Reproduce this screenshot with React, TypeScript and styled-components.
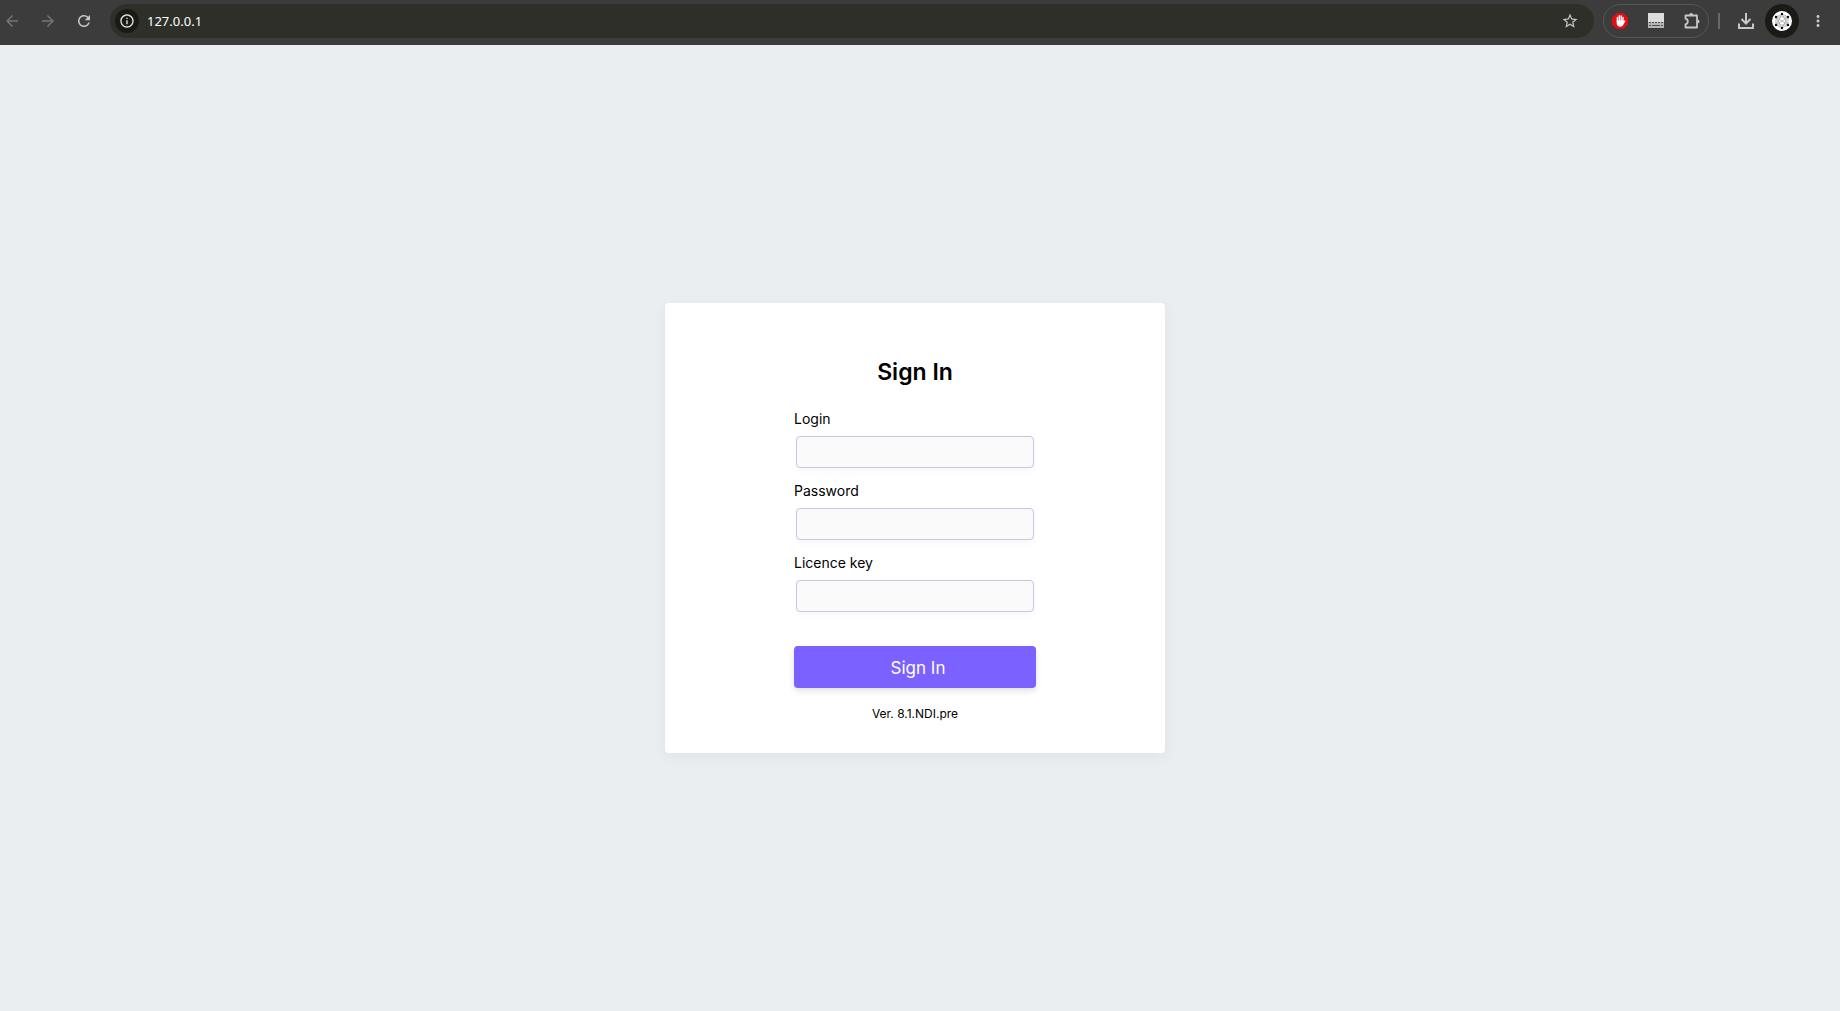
import React from "react";
import styled, { createGlobalStyle } from "styled-components";
import {
  MdArrowBack,
  MdArrowForward,
  MdRefresh,
  MdInfoOutline,
  MdStarBorder,
  MdMoreVert,
} from "react-icons/md";

const GlobalStyle = createGlobalStyle`
  *, *::before, *::after { box-sizing: border-box; }
  body {
    margin: 0;
    background: #eaeef1;
    color: #000;
    font-family: Inter, "Liberation Sans", sans-serif;
  }
`;

const Window = styled.div`
  display: flex;
  flex-direction: column;
  min-height: 100vh;
`;

const Toolbar = styled.header`
  display: flex;
  align-items: center;
  gap: 9px;
  height: 45px;
  padding: 0 12px 3px 2px;
  background: #3c3c3c;
`;

const NavGroup = styled.nav`
  display: flex;
  gap: 16px;
  margin-right: 7px;
`;

const IconButton = styled.button<{ $dim?: boolean }>`
  display: flex;
  align-items: center;
  justify-content: center;
  flex: none;
  width: 20px;
  height: 20px;
  padding: 0;
  border: 0;
  background: none;
  color: ${(p) => (p.$dim ? "#757575" : "#c7c7c7")};
  font-size: 18px;
`;

const AddressBar = styled.div`
  display: flex;
  align-items: center;
  flex: 1;
  gap: 8px;
  height: 34px;
  padding: 0 14px 0 5px;
  border-radius: 17px;
  background: #2f2f2a;
`;

const SiteInfo = styled(IconButton)`
  width: 24px;
  height: 24px;
  border-radius: 50%;
  background: #1a1a16;
  color: #e6e6e6;
  font-size: 16px;
`;

const Address = styled.input`
  flex: 1;
  min-width: 0;
  padding: 0;
  border: 0;
  outline: 0;
  background: none;
  color: #fff;
  font: 13px/20px "Noto Sans", sans-serif;
`;

const Extensions = styled.div`
  display: flex;
  align-items: center;
  gap: 16px;
  height: 34px;
  padding: 0 6px;
  border: 1px solid #575757;
  border-radius: 17px;
`;

const Divider = styled.span`
  width: 2px;
  height: 16px;
  margin-right: 7px;
  background: #686868;
`;

const Profile = styled(IconButton)`
  width: 34px;
  height: 34px;
  border-radius: 50%;
  background: #1a1a16;
`;

const Page = styled.main`
  display: flex;
  flex: 1;
  align-items: center;
  justify-content: center;
  padding-right: 10px;
`;

const Card = styled.form`
  display: flex;
  flex-direction: column;
  align-items: center;
  width: 500px;
  padding: 54px 24px 30px;
  border-radius: 4px;
  background: #fff;
  box-shadow: 0 4px 16px rgba(0, 0, 0, 0.05);
`;

const Title = styled.h1`
  margin: 0 0 21px;
  font-size: 23px;
  font-weight: 600;
  line-height: 30px;
`;

const Field = styled.div`
  display: flex;
  flex-direction: column;
  width: 242px;
  padding-bottom: 12px;
`;

const Label = styled.label`
  padding: 1px 0 8px;
  font-size: 14px;
  line-height: 19px;
`;

const TextInput = styled.input`
  height: 32px;
  margin: 0 2px;
  padding: 0 8px;
  border: 1px solid #c3c7e3;
  border-radius: 4px;
  background: #fafafa;
  box-shadow: 0 4px 6px rgba(0, 0, 0, 0.03);
  font: inherit;
`;

const Submit = styled.button`
  width: 242px;
  height: 42px;
  margin: 22px 0 16px;
  padding: 2px 0 0 6px;
  border: 0;
  border-radius: 4px;
  background: #7b61ff;
  box-shadow: 0 3px 6px rgba(0, 0, 0, 0.12);
  color: #fff;
  font: 400 17px/24px Inter, sans-serif;
`;

const Version = styled.p`
  margin: 0;
  font-size: 12px;
  line-height: 19px;
`;

const BlockerIcon = () => (
  <svg width="16" height="16" viewBox="0 0 16 16">
    <path d="M4.700 0h6.600L16 4.700v6.600L11.300 16H4.700L0 11.300V4.700z" fill="#e40d12" />
    <path
      d="M5.400 4.500v4M7.300 2.800v6M9.200 2.900v6M11 4.500v5"
      stroke="#fff"
      strokeWidth="1.400"
      strokeLinecap="round"
    />
    <path
      d="M4.700 7.500h7v.8l.8-.8c.6-.4 1.100 0 .8.700l-1.900 3.600c-.7 1.300-1.700 1.900-3.100 1.900-2.200 0-3.600-1.400-3.600-3.500z"
      fill="#fff"
    />
  </svg>
);

const KeyboardIcon = () => (
  <svg width="16" height="16" viewBox="0 0 16 16">
    <path d="M0 0h16v9H0z" fill="#dcdcdc" />
    <path d="M0 9h16v6H0z" fill="#b4b4b4" />
    <path d="M1 9.500h2m1 0h2m1 0h2m1 0h2m1 0h2M1 12.500h2m1 0h8m1 0h2" stroke="#555" />
  </svg>
);

const PuzzleIcon = () => (
  <svg width="18" height="18" viewBox="0 0 18 18">
    <path
      d="M2.500 3.500H14v12H2.500v-3.200c1.500-.4 2.300-1.400 2.300-2.800S4 7.100 2.500 6.700z"
      fill="none"
      stroke="#c7c7c7"
      strokeWidth="1.800"
      strokeLinejoin="round"
    />
    <path d="M6.200 3a2 2 0 0 1 4 0zM14.500 7.500a2 2 0 0 1 0 4z" fill="#c7c7c7" />
  </svg>
);

const DownloadIcon = () => (
  <svg width="16" height="16" viewBox="0 0 16 16" fill="none" stroke="#c7c7c7" strokeWidth="2">
    <path d="M8 0v10M3.500 6l4.500 4.500L12.500 6M1 10.500V15h14v-4.500" />
  </svg>
);

const hexagon = [
  [10, 3],
  [16, 6],
  [16, 14],
  [10, 17],
  [4, 14],
  [4, 6],
];

const AvatarIcon = () => (
  <svg width="20" height="20" viewBox="0 0 20 20">
    <circle cx="10" cy="10" r="10" fill="#fff" />
    <path
      d="M10 3l6 3v8l-6 3-6-3V6zM4 6l12 8M16 6L4 14M4 6h12L10 17zM4 14h12L10 3z"
      fill="none"
      stroke="#777"
      strokeWidth="0.500"
    />
    {hexagon.map(([x, y]) => (
      <circle key={`${x}-${y}`} cx={x} cy={y} r="1.200" fill="#111" />
    ))}
  </svg>
);

const fields = [
  { id: "login", label: "Login", type: "text" },
  { id: "password", label: "Password", type: "password" },
  { id: "licence", label: "Licence key", type: "text" },
];

export default function App() {
  return (
    <Window>
      <GlobalStyle />
      <Toolbar>
        <NavGroup>
          <IconButton $dim aria-label="Back"><MdArrowBack /></IconButton>
          <IconButton $dim aria-label="Forward"><MdArrowForward /></IconButton>
          <IconButton aria-label="Reload"><MdRefresh /></IconButton>
        </NavGroup>
        <AddressBar>
          <SiteInfo aria-label="Site information"><MdInfoOutline /></SiteInfo>
          <Address aria-label="Address" defaultValue="127.0.0.1" />
          <IconButton aria-label="Bookmark"><MdStarBorder /></IconButton>
        </AddressBar>
        <Extensions>
          <IconButton aria-label="Ad blocker"><BlockerIcon /></IconButton>
          <IconButton aria-label="Keyboard"><KeyboardIcon /></IconButton>
          <IconButton aria-label="Extensions"><PuzzleIcon /></IconButton>
        </Extensions>
        <Divider />
        <IconButton aria-label="Downloads"><DownloadIcon /></IconButton>
        <Profile aria-label="Profile"><AvatarIcon /></Profile>
        <IconButton aria-label="Menu"><MdMoreVert /></IconButton>
      </Toolbar>
      <Page>
        <Card onSubmit={(e) => e.preventDefault()}>
          <Title>Sign In</Title>
          {fields.map((f) => (
            <Field key={f.id}>
              <Label htmlFor={f.id}>{f.label}</Label>
              <TextInput id={f.id} type={f.type} />
            </Field>
          ))}
          <Submit type="submit">Sign In</Submit>
          <Version>Ver. 8.1.NDI.pre</Version>
        </Card>
      </Page>
    </Window>
  );
}
